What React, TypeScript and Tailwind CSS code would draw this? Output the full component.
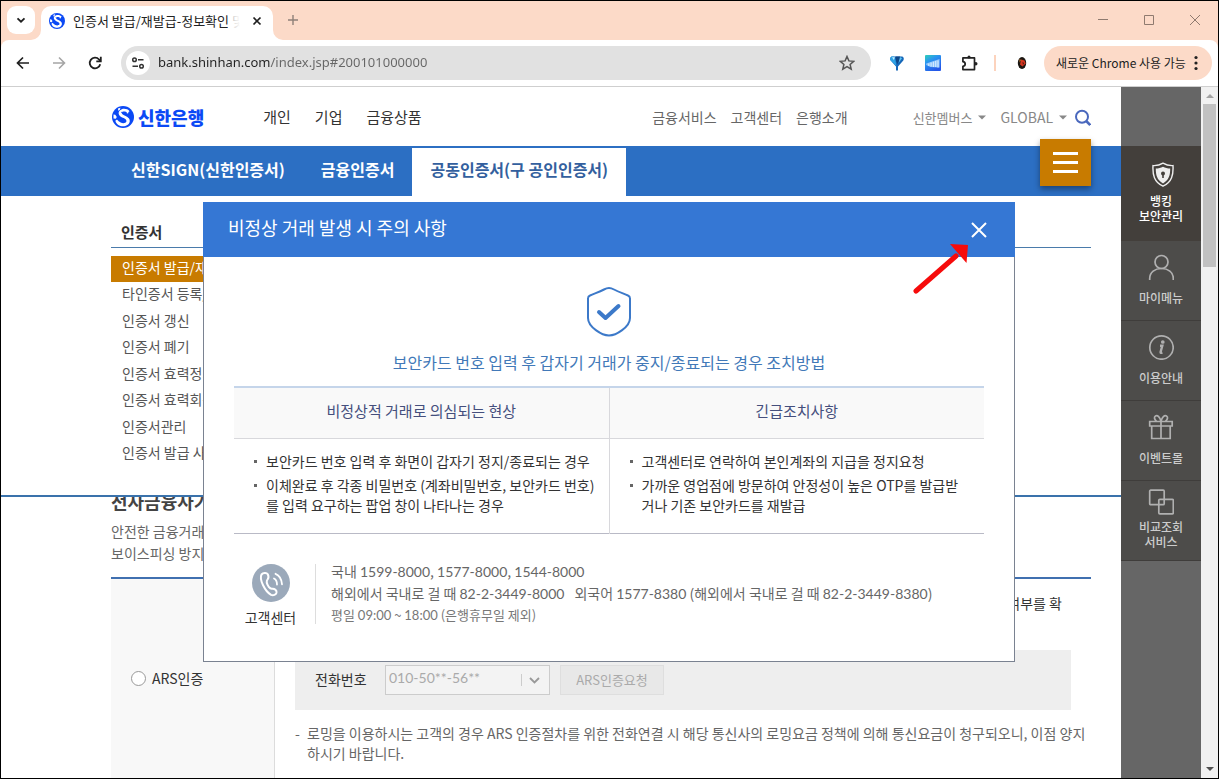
import React from "react";

function ShinhanMark({ className }: { className: string }) {
  return (
    <svg viewBox="0 0 22 22" className={className} aria-hidden="true">
      <circle cx="11" cy="11" r="11" fill="#0b49f5" />
      <path
        d="M17.500 5.200C16 3.200 12.500 2.300 9.800 3.200 7.200 4.100 6 6.300 6.900 8.400c.8 1.800 2.700 2.700 4.700 3.700 1.900 1 3.200 1.900 2.800 3.400-.5 1.700-3.400 2.100-5.700 1.100-1.500-.7-2.700-1.800-3.700-3.200l-1.700 1.400c.6 2.500 2.600 4.500 5.200 5.200 4.200 1.200 8.400-.7 9.200-4.200.6-2.700-1.500-4.300-4.100-5.700-2.200-1.200-4-1.900-3.800-3.300.2-1.300 2.100-1.700 4-1.100l.9.500.2 1.300 1.300-.2.300-1.400z"
        fill="#fff"
      />
      <path d="M1.500 8.500l1.800.3 1.500 2.200-1 1.800-2.300-.4zM6 2.500l2.500-.8-.8 2.300-1.500.8z" fill="#fff" />
      <path d="M8.500 13.900l2.300.4-.8 1.400-1.500-.4zM9 6l1.200-.3-.5 1.500z" fill="#0b49f5" />
    </svg>
  );
}

function Caret() {
  return (
    <svg width="8" height="5" viewBox="0 0 8 5" className="ml-1.5" aria-hidden="true">
      <path d="M0 .5h8L4 4.500z" fill="#888" />
    </svg>
  );
}

function TabStrip() {
  return (
    <header className="flex h-[39px] items-start bg-[#fcdac8] pl-[6px] pr-[18px]">
      <button aria-label="탭 검색" className="mt-[5px] flex h-7 w-7 shrink-0 items-center justify-center rounded-[9px] bg-white">
        <svg width="10" height="10" viewBox="0 0 10 10" fill="none" stroke="#1f1f1f" strokeWidth="1.800">
          <path d="M1.500 3.300L5 6.700l3.500-3.400" />
        </svg>
      </button>
      <div className="relative ml-[6px] mt-[5px] flex h-[34px] w-[232px] items-center rounded-t-[10px] bg-white pb-[5px] pl-2 pr-[11px]">
        <svg className="absolute bottom-0 -left-[10px]" width="10" height="10" viewBox="0 0 10 10" aria-hidden="true">
          <path d="M10 0v10H0A10 10 0 0 0 10 0z" fill="#fff" />
        </svg>
        <svg className="absolute bottom-0 -right-[10px]" width="10" height="10" viewBox="0 0 10 10" aria-hidden="true">
          <path d="M0 0v10h10A10 10 0 0 1 0 0z" fill="#fff" />
        </svg>
        <ShinhanMark className="h-4 w-4 shrink-0" />
        <span className="relative ml-2 flex-1 overflow-hidden whitespace-nowrap text-[13px] text-[#222]">
          인증서 발급/재발급-정보확인 및
          <span className="absolute inset-y-0 right-0 w-3 bg-linear-to-r from-white/60 to-white" />
        </span>
        <button aria-label="탭 닫기" className="ml-3">
          <svg width="10" height="10" viewBox="0 0 10 10" stroke="#1f1f1f" strokeWidth="1.700">
            <path d="M1.500 1.500l7 7M8.500 1.500l-7 7" />
          </svg>
        </button>
      </div>
      <button aria-label="새 탭" className="ml-[15px] mt-[14px]">
        <svg width="10" height="10" viewBox="0 0 10 10" stroke="#8f8078" strokeWidth="1.400">
          <path d="M5 0v10M0 5h10" />
        </svg>
      </button>
      <div className="ml-auto mt-[14px] flex gap-9">
        <button aria-label="최소화">
          <svg width="10" height="10" viewBox="0 0 10 10" stroke="#8f7a6f">
            <path d="M0 4.500h10" />
          </svg>
        </button>
        <button aria-label="최대화">
          <svg width="10" height="10" viewBox="0 0 10 10" stroke="#8f7a6f" fill="none">
            <path d="M.5.5h9v9h-9z" />
          </svg>
        </button>
        <button aria-label="닫기">
          <svg width="10" height="10" viewBox="0 0 10 10" stroke="#8f7a6f">
            <path d="M0 0l10 10M10 0L0 10" />
          </svg>
        </button>
      </div>
    </header>
  );
}

function Toolbar() {
  return (
    <div className="bg-[#fcdac8]">
      <div className="flex h-[47px] items-center rounded-t-[8px] border-b border-[#cfcfcf] bg-white pl-[13px] pr-[6px]">
        <button aria-label="뒤로">
          <svg width="18" height="18" viewBox="0 0 18 18" fill="none" stroke="#1f1f1f" strokeWidth="1.700">
            <path d="M15 9H4M9 3.500L3.500 9 9 14.500" />
          </svg>
        </button>
        <button aria-label="앞으로" className="ml-[18px]">
          <svg width="18" height="18" viewBox="0 0 18 18" fill="none" stroke="#a5a5a5" strokeWidth="1.600">
            <path d="M3 9h11M9 3.500L14.500 9 9 14.500" />
          </svg>
        </button>
        <button aria-label="새로고침" className="ml-[18px]">
          <svg width="18" height="18" viewBox="0 0 18 18" fill="none" stroke="#1f1f1f" strokeWidth="1.800">
            <path d="M14.200 10.200A5.300 5.300 0 1 1 13 5.500l1.500 1.500" />
            <path d="M14.800 2.800v4.500h-4.500" />
          </svg>
        </button>
        <div className="ml-[17px] flex h-[34px] flex-1 items-center rounded-full bg-[#e1e1e1] pl-[5px] pr-4">
          <button aria-label="사이트 정보" className="flex h-6 w-6 items-center justify-center rounded-full bg-white">
            <svg width="14" height="12" viewBox="0 0 14 12" fill="none" stroke="#333" strokeWidth="1.500">
              <circle cx="3.500" cy="2.800" r="1.800" />
              <path d="M7 2.800h5.500M1.500 9.200H7" />
              <circle cx="10.500" cy="9.200" r="1.800" />
            </svg>
          </button>
          <input
            type="text"
            aria-label="주소"
            defaultValue="bank.shinhan.com/index.jsp#200101000000"
            className="ml-2 min-w-0 flex-1 bg-[linear-gradient(to_right,#222_112px,#666_112px)] bg-clip-text font-['Noto_Sans'] text-[13px] text-transparent outline-none"
          />
          <button aria-label="북마크">
            <svg width="16" height="16" viewBox="0 0 16 16" fill="none" stroke="#555" strokeWidth="1.500">
              <path d="M8 1.500l1.900 4.400 4.800.4-3.600 3.200 1.100 4.700L8 11.700l-4.200 2.500 1.100-4.700L1.300 6.300l4.800-.4z" />
            </svg>
          </button>
        </div>
        <div className="ml-[18px] flex items-center gap-5">
          <svg width="16" height="16" viewBox="0 0 16 16" aria-hidden="true">
            <path d="M3.500 1.500h9c2 0 3 2.200 1.800 4L9 11.500v4H7v-4L1.700 5.500C.5 3.700 1.500 1.500 3.500 1.500z" fill="#1667b8" />
            <path d="M3.500 1.500C1.500 1.500.5 3.700 1.700 5.500L7.300 11 6.500 5 5 1.500z" fill="#2fa3e6" />
            <path d="M6.500 1.500h4.500l1 2L8.500 9 7 6z" fill="#0e4688" />
            <path d="M3 2.200h3L4.800 5z" fill="#c3f0ff" />
            <path d="M11 2l2 1.200L9.500 8z" fill="#5cc4f5" />
          </svg>
          <svg width="16" height="16" viewBox="0 0 16 16" aria-hidden="true">
            <defs>
              <linearGradient id="ext" x1="0" y1="0" x2="0.600" y2="1">
                <stop offset="0" stopColor="#2fd0b8" />
                <stop offset="0.400" stopColor="#2a95f0" />
                <stop offset="1" stopColor="#2457e8" />
              </linearGradient>
            </defs>
            <rect width="16" height="16" rx="1" fill="url(#ext)" />
            <path d="M1.200 8.500L14.500 4v8.500l-9-.5-4.300-2z" fill="#8cc4fb" />
            <path d="M3.800 11V8.500M6.100 11.500V7.500M8.400 12V6.800M10.700 12V6M13 12.500V5.500" stroke="#d5ebff" strokeWidth="1.100" />
          </svg>
          <button aria-label="확장 프로그램">
            <svg width="17" height="17" viewBox="0 0 17 17" fill="none" stroke="#222" strokeWidth="1.700">
              <path d="M1.900 2.900h11.600v11.700H1.900v-3.300q2.300-.3 2.300-2.300t-2.300-2.300z" strokeLinejoin="round" />
              <circle cx="8" cy="1.900" r="1.500" fill="#222" stroke="none" />
              <circle cx="14.800" cy="8.800" r="1.700" fill="#222" stroke="none" />
            </svg>
          </button>
        </div>
        <span className="ml-[16px] h-4 w-0.5 bg-[#fcd3bd]" />
        <button aria-label="프로필" className="ml-[18px]">
          <svg width="16" height="16" viewBox="0 0 16 16">
            <ellipse cx="8" cy="8" rx="4.200" ry="6" fill="#1b1712" />
            <path d="M7 4.500l3.500 1 1.200 3L8.500 11.500 6 9.500z" fill="#d6361f" />
            <path d="M5.500 4l1.500 1-1.500 2.500z" fill="#c77a2c" />
            <path d="M8.500 7l1.500 1L9 10z" fill="#3d1210" />
          </svg>
        </button>
        <button className="ml-[14px] flex h-[34px] w-[168px] items-center justify-between rounded-full bg-[#fcdac8] pl-3 pr-[14px] text-[12px] text-[#222]">
          <span className="whitespace-nowrap">새로운 Chrome 사용 가능</span>
          <svg width="4" height="16" viewBox="0 0 4 16" fill="#222">
            <circle cx="2" cy="2.500" r="1.600" />
            <circle cx="2" cy="8" r="1.600" />
            <circle cx="2" cy="13.500" r="1.600" />
          </svg>
        </button>
      </div>
    </div>
  );
}

function SiteHeader() {
  return (
    <div className="relative">
      <div className="flex h-[59px] items-center whitespace-nowrap pb-px pl-[111px] pr-[30px] pt-[3px]">
        <a href="#home" className="flex items-center pb-0.5 text-[18px] font-black text-[#0b49f5]">
          <ShinhanMark className="h-[22px] w-[22px]" />
          <span className="ml-1 leading-6">신한은행</span>
        </a>
        <nav className="ml-[59px] flex gap-6 text-[15px] text-[#333]">
          <a href="#personal">개인</a>
          <a href="#business">기업</a>
          <a href="#products">금융상품</a>
        </nav>
        <nav className="ml-auto flex gap-[14px] text-[14px] text-[#666]">
          <a href="#services">금융서비스</a>
          <a href="#center">고객센터</a>
          <a href="#about">은행소개</a>
        </nav>
        <button className="ml-[65px] flex items-center text-[13px] text-[#888]">
          신한멤버스
          <Caret />
        </button>
        <button className="ml-[14px] flex items-center text-[14px] text-[#888]">
          GLOBAL
          <Caret />
        </button>
        <button aria-label="검색" className="ml-2">
          <svg width="16" height="17" viewBox="0 0 16 17" fill="none" stroke="#4a68bd" strokeWidth="2">
            <circle cx="7" cy="7.800" r="6" />
            <path d="M11.200 12l4 4" strokeWidth="2.500" />
          </svg>
        </button>
      </div>
      <nav className="flex h-[50px] items-end whitespace-nowrap bg-[#2c6fc3] pl-[112px] text-[16px] font-bold text-white">
        <a href="#sign" className="flex h-12 items-center px-[18px] pb-1.5">신한SIGN(신한인증서)</a>
        <a href="#fin" className="flex h-12 items-center px-[18px] pb-1.5">금융인증서</a>
        <a href="#joint" className="flex h-12 items-center bg-white px-[18px] pb-1.5 text-[#335f9e]">공동인증서(구 공인인증서)</a>
      </nav>
      <button
        aria-label="전체메뉴"
        className="absolute right-[30px] top-[52px] flex h-[47px] w-[51px] flex-col items-center justify-center gap-[6px] bg-[#c87b00] shadow-[0_3px_6px_rgba(0,0,0,0.4)]"
      >
        <span className="h-[3px] w-[25px] bg-white" />
        <span className="h-[3px] w-[25px] bg-white" />
        <span className="h-[3px] w-[25px] bg-white" />
      </button>
    </div>
  );
}

const subMenu = [
  "인증서 발급/재발급",
  "타인증서 등록/해제",
  "인증서 갱신",
  "인증서 폐기",
  "인증서 효력정지",
  "인증서 효력회복",
  "인증서관리",
  "인증서 발급 사실확인",
];

function SubMenu() {
  return (
    <div className="relative border-b-2 border-[#3a72ab] bg-white pb-7 pl-[110px] pr-[30px] pt-[22px]">
      <h2 className="h-[30px] border-b border-[#4a7bab] pl-[10px] text-[15px] font-bold leading-7 text-[#333]">인증서</h2>
      <ul className="mt-2 flex h-[211px] w-[180px] flex-col justify-between text-[14px] leading-[22px] text-[#555]">
        {subMenu.map((item, i) => (
          <li key={item} className={i === 0 ? "bg-[#c87b00] text-white" : ""}>
            <a href={"#menu" + i} className="block h-[26px] pl-[11px]">{item}</a>
          </li>
        ))}
      </ul>
    </div>
  );
}

function PageBody() {
  return (
    <section className="-mt-[9px] pl-[110px] pr-[30px]">
      <h1 className="text-[18px] font-bold leading-[26px] text-[#444]">전자금융사기</h1>
      <p className="mt-[6px] text-[14px] leading-[22px] text-[#666]">
        안전한 금융거래
        <br />
        보이스피싱 방지
      </p>
      <div className="mt-[13px] flex border-t-2 border-[#4070b0]">
        <div className="flex w-[164px] shrink-0 flex-col border-r border-[#dcdcdc] bg-[#f8f8f8] pb-[120px] pl-5 pt-[89px]">
          <label className="flex items-center gap-[6px] text-[14px] text-[#333]">
            <input type="radio" name="auth" className="h-[15px] w-[15px] appearance-none rounded-full border border-[#999] bg-white" />
            ARS인증
          </label>
        </div>
        <div className="min-w-0 flex-1 px-5 pt-[13px]">
          <p className="pr-[9px] text-right text-[14px] leading-[22px] text-[#333]">여부를 확</p>
          <div className="mt-[36px] flex h-[60px] items-center bg-[#eee] pl-5">
            <label htmlFor="phone" className="w-[70px] pb-0.5 text-[14px] text-[#333]">전화번호</label>
            <div className="relative">
              <select
                id="phone"
                disabled
                className="block h-[30px] w-[165px] appearance-none border border-[#ccc] bg-[#f3f3f3] pb-1.5 pl-[3px] font-['Lato'] text-[14px] text-[#aaa] opacity-100"
              >
                <option>010-50**-56**</option>
              </select>
              <svg className="absolute right-[9px] top-[9px]" width="20" height="13" viewBox="0 0 20 13" fill="none" aria-hidden="true">
                <path d="M.5 0v12" stroke="#ccc" />
                <path d="M9 4l4.500 4.500L18 4" stroke="#999" strokeWidth="1.800" />
              </svg>
            </div>
            <button disabled className="ml-[10px] h-[30px] w-[104px] border border-[#dedede] bg-[#e8e8e8] text-[13px] text-[#aaa]">ARS인증요청</button>
          </div>
          <ul className="mt-[13px] text-[14px] leading-5 text-[#666]">
            <li className="flex whitespace-nowrap">
              <span className="w-3 shrink-0">-</span>
              <span>
                로밍을 이용하시는 고객의 경우 ARS 인증절차를 위한 전화연결 시 해당 통신사의 로밍요금 정책에 의해 통신요금이 청구되오니, 이점 양지
                <br />
                하시기 바랍니다.
              </span>
            </li>
          </ul>
        </div>
      </div>
    </section>
  );
}

const quick = [
  {
    label: "마이메뉴",
    icon: (
      <>
        <circle cx="13.500" cy="8" r="6.500" />
        <path d="M1.700 26v-1.500C1.700 18 7 14.500 13.500 14.500S25.300 18 25.300 24.500V26" />
      </>
    ),
  },
  {
    label: "이용안내",
    icon: (
      <>
        <circle cx="13.500" cy="13.500" r="11.700" />
        <path d="M12 11.800h2.300l-1.700 6.200q-.3 1.300 1.800.6" strokeWidth="2.400" />
        <circle cx="14.800" cy="8" r="1" fill="#b0b0b0" />
      </>
    ),
  },
  {
    label: "이벤트몰",
    icon: (
      <>
        <path d="M1.700 7.500h22.500v4.500H1.700zM3.700 12v12.500h18.500V12M13 7.500v17" />
        <path d="M13 7.500C12 3 9.500.8 7.500 2c-1.800 1.200-1.200 3 1 5.500M13 7.500C14 3 16.500.8 18.500 2c1.800 1.200 1.200 3-1 5.500" />
      </>
    ),
  },
  {
    label: "비교조회\n서비스",
    icon: (
      <>
        <rect x="1.700" y="1.200" width="14.500" height="14.500" rx="1" />
        <rect x="10.800" y="10.300" width="14.500" height="14.500" rx="1" />
      </>
    ),
  },
];

function QuickBar() {
  return (
    <aside className="w-20 shrink-0 bg-[#666] pt-[59px] text-center text-[12px] font-medium leading-[15px]">
      <a href="#security" className="flex h-[95px] flex-col items-center bg-[#433f3b] pt-[16px] text-white">
        <svg width="26" height="26" viewBox="0 0 26 26" aria-hidden="true">
          <path d="M15 1.200c3 1.800 6.200 2.600 10 2.400.5 9-1 16.400-10 20.600C6 20 4.500 12.600 5 3.600c3.800.2 7-.6 10-2.400z" fill="none" stroke="#eee" strokeWidth="1.400" />
          <path d="M15 4.800c2.200 1.200 4.500 1.700 7.200 1.800.1 6.500-1.200 11.500-7.200 14.800-6-3.300-7.300-8.300-7.200-14.800 2.700-.1 5-.6 7.200-1.800z" fill="#eee" />
          <circle cx="15" cy="11.500" r="2" fill="#433f3b" />
          <path d="M14.200 12h1.600v4h-1.600z" fill="#433f3b" />
        </svg>
        <span className="mt-[5px]">뱅킹<br />보안관리</span>
      </a>
      {quick.map((q) => (
        <a
          key={q.label}
          href="#quick"
          className="flex h-20 flex-col items-center justify-between border-b border-[#3f3d3b] bg-[#4d4c4a] pb-[15px] pt-[13px] text-[#ccc] last:pb-[11px] last:pt-[8px]"
        >
          <svg width="26" height="26" viewBox="0 0 26 26" fill="none" stroke="#b0b0b0" strokeWidth="1.700" aria-hidden="true">
            {q.icon}
          </svg>
          <span className="whitespace-pre-line">{q.label}</span>
        </a>
      ))}
    </aside>
  );
}

function ScrollBar() {
  return (
    <div className="flex w-[17px] shrink-0 flex-col items-center bg-[#f1f1f1]" aria-hidden="true">
      <svg width="17" height="17" viewBox="0 0 17 17"><path d="M5 11h8L9 7z" fill="#a3a3a3" /></svg>
      <span className="h-[163px] w-[13px] bg-[#c1c1c1]" />
      <svg className="mt-auto" width="17" height="17" viewBox="0 0 17 17"><path d="M5 6h8l-4 4z" fill="#505050" /></svg>
    </div>
  );
}

function Bullets({ items }: { items: string[] }) {
  return (
    <ul className="flex flex-col gap-1">
      {items.map((t) => (
        <li key={t} className="flex">
          <span className="mt-[9px] h-[3px] w-[3px] shrink-0 bg-[#666]" />
          <span className="ml-[9px] whitespace-pre">{t}</span>
        </li>
      ))}
    </ul>
  );
}

function Num({ children }: { children: string }) {
  return <span className="font-['Lato'] leading-none">{children}</span>;
}

function NoticeDialog() {
  return (
    <div
      role="dialog"
      aria-labelledby="notice-title"
      className="absolute left-[202px] top-[115px] w-[812px] whitespace-nowrap border border-[#7a8291] bg-white"
    >
      <div className="-mx-px -mt-px flex h-[55px] items-center justify-between bg-[#3577d4] pl-[25px] pr-[28px] text-white">
        <h2 id="notice-title" className="pb-1 text-[18px]">비정상 거래 발생 시 주의 사항</h2>
        <button aria-label="닫기">
          <svg width="16" height="16" viewBox="0 0 16 16" stroke="#fff" strokeWidth="2">
            <path d="M1 1l14 14M15 1L1 15" />
          </svg>
        </button>
      </div>
      <div className="px-[30px] pb-[35px] pt-[29px]">
        <svg className="mx-auto block" width="46" height="51" viewBox="0 0 46 51" fill="none" stroke="#3c79c9" aria-hidden="true">
          <path d="M23 2c-1.200 0-3 .4-5 1.500C13.500 6 8.500 7.500 4 9.500 2.300 10.200 2 11 2 12.500V32c0 9 14 17.500 21 17.500S44 41 44 32V12.500c0-1.500-.3-2.300-2-3C37.500 7.500 32.500 6 28 3.500 26 2.400 24.200 2 23 2z" strokeWidth="2" />
          <path d="M13 26l6.500 6L32.500 20" strokeWidth="4" strokeLinecap="round" strokeLinejoin="round" />
        </svg>
        <p className="mt-[13px] text-center text-[16px] leading-6 text-[#4279b8]">보안카드 번호 입력 후 갑자기 거래가 중지/종료되는 경우 조치방법</p>
        <table className="mt-3 w-full table-fixed border-collapse text-[14px]">
          <thead>
            <tr className="h-[51px] border-b border-t-2 border-b-[#d8d8dc] border-t-[#c5d5ea] bg-[#f9f9f9] text-[15px] text-[#454f7d]">
              <th className="border-r border-[#d8d8dc] p-0 pb-[3px] font-normal">비정상적 거래로 의심되는 현상</th>
              <th className="p-0 pb-[3px] font-normal">긴급조치사항</th>
            </tr>
          </thead>
          <tbody>
            <tr className="border-b border-[#b9bac6] align-top leading-5 text-[#333]">
              <td className="border-r border-[#d8d8dc] p-0 pb-[18px] pl-5 pt-3">
                <Bullets
                  items={[
                    "보안카드 번호 입력 후 화면이 갑자기 정지/종료되는 경우",
                    "이체완료 후 각종 비밀번호 (계좌비밀번호, 보안카드 번호)\n를 입력 요구하는 팝업 창이 나타나는 경우",
                  ]}
                />
              </td>
              <td className="p-0 pb-[18px] pl-5 pt-3">
                <Bullets
                  items={[
                    "고객센터로 연락하여 본인계좌의 지급을 정지요청",
                    "가까운 영업점에 방문하여 안정성이 높은 OTP를 발급받\n거나 기존 보안카드를 재발급",
                  ]}
                />
              </td>
            </tr>
          </tbody>
        </table>
        <div className="mt-[26px] flex items-start">
          <div className="mt-1 flex h-[60px] w-[82px] flex-col items-center border-r border-[#ddd] pr-[8px] text-[14px] leading-5 text-[#333]">
            <svg width="38" height="38" viewBox="0 0 38 38" className="shrink-0" fill="none" aria-hidden="true">
              <circle cx="19" cy="19" r="19" fill="#9ba9ba" />
              <path
                d="M9.500 10.500c1.500-1.800 5-2.300 6.300-.3.800 1.700.8 4-.2 5.200-1.400 1.500-1.200 4 1.400 7.800.9 1.200 2 1.700 3.300 1.500 2.300-.3 4.700 2 4.200 4-.6 2-3.200 3.200-5.400 2.200C13 27.500 7 15.500 9.500 10.500z"
                stroke="#fff"
                strokeWidth="2"
              />
              <path d="M22 14.500q3 1.500 3 6M23.500 9.800q6 2.500 6.500 10.500" stroke="#fff" strokeWidth="1.800" strokeLinecap="round" />
            </svg>
            <span className="mt-[5px]">고객센터</span>
          </div>
          <div className="ml-[15px] text-[14px] leading-[22px] text-[#666]">
            <p>국내 <Num>1599-8000</Num>, <Num>1577-8000</Num>, <Num>1544-8000</Num></p>
            <p>
              해외에서 국내로 걸 때 <Num>82-2-3449-8000</Num>
              <span className="ml-[10px]">외국어 <Num>1577-8380</Num> (해외에서 국내로 걸 때 <Num>82-2-3449-8380</Num>)</span>
            </p>
            <p className="text-[13px] text-[#777]">평일 <Num>09:00</Num> ~ <Num>18:00</Num> (은행휴무일 제외)</p>
          </div>
        </div>
      </div>
    </div>
  );
}

export default function App() {
  return (
    <div className="flex h-screen flex-col overflow-hidden border border-black bg-white font-['Noto_Sans_CJK_KR',sans-serif]">
      <TabStrip />
      <Toolbar />
      <div className="relative flex min-h-0 flex-1 overflow-hidden">
        <main className="min-w-0 flex-1">
          <SiteHeader />
          <SubMenu />
          <PageBody />
        </main>
        <QuickBar />
        <ScrollBar />
        <NoticeDialog />
        <svg className="absolute left-[911px] top-[154px]" width="60" height="56" viewBox="0 0 60 56" aria-hidden="true">
          <path d="M4 50L44 15" stroke="#f60b0b" strokeWidth="5" strokeLinecap="round" />
          <path d="M38 3l18 1-1.500 18z" fill="#f60b0b" />
        </svg>
      </div>
    </div>
  );
}
